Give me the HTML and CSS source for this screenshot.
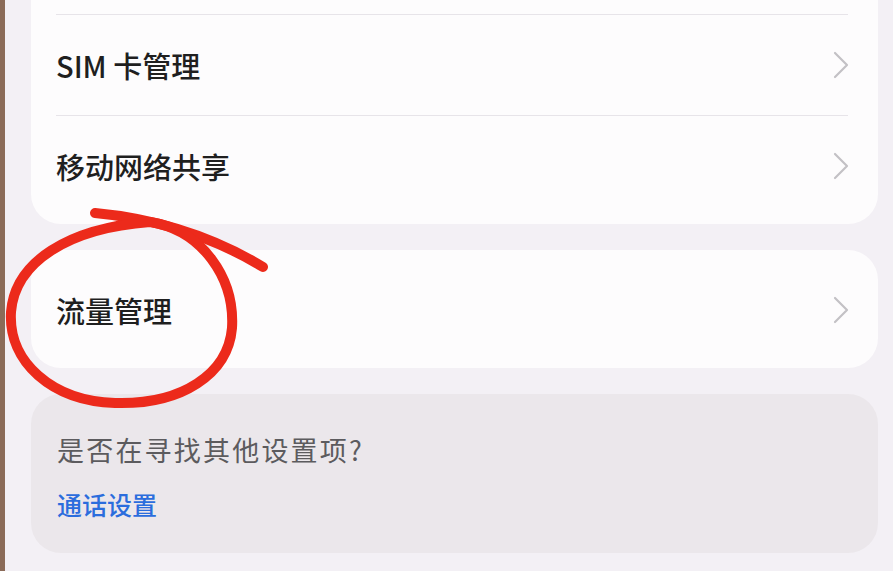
FILE: index.html
```html
<!DOCTYPE html>
<html lang="zh-CN">
<head>
<meta charset="utf-8">
<title>移动网络</title>
<link rel="stylesheet" href="styles.css">
</head>
<body>
<div class="screen">
  <div class="card card-list">
    <div class="row-partial"></div>
    <div class="row">
      <span class="label">SIM 卡管理</span>
      <svg class="chev" viewBox="0 0 16 28" width="16" height="28"><polyline points="2,2 14,14 2,26" /></svg>
    </div>
    <div class="row">
      <span class="label">移动网络共享</span>
      <svg class="chev" viewBox="0 0 16 28" width="16" height="28"><polyline points="2,2 14,14 2,26" /></svg>
    </div>
  </div>

  <div class="card card-single">
    <div class="row row-single">
      <span class="label">流量管理</span>
      <svg class="chev" viewBox="0 0 16 28" width="16" height="28"><polyline points="2,2 14,14 2,26" /></svg>
    </div>
  </div>

  <div class="card card-hint">
    <p class="hint">是否在寻找其他设置项?</p>
    <a class="link">通话设置</a>
  </div>

  <svg class="annotation" viewBox="0 0 893 571" width="893" height="571">
    <path class="ink" d="M 263 267 C 225 244, 170 220, 95 213" />
    <path class="ink" d="M 150 222 C 202 230, 235 278, 232 328 C 228 374, 182 405, 115 403 C 52 401, 8 362, 11 312 C 15 262, 68 228, 150 222" />
  </svg>
</div>
</body>
</html>
```
FILE: styles.css
```css
* { box-sizing: border-box; }

html, body {
  margin: 0;
  padding: 0;
  width: 893px;
  height: 571px;
  overflow: hidden;
  background: #f3f0f5;
  font-family: "Noto Sans CJK SC", "Noto Sans", sans-serif;
}

.screen {
  position: relative;
  width: 893px;
  height: 571px;
  border-left: 5px solid #8b6b58;
  padding: 0 15px 0 26px;
  display: flex;
  flex-direction: column;
  gap: 26px;
  overflow: hidden;
}

.card {
  background: #fdfcfd;
  border-radius: 30px;
  width: 847px;
}

.card-list {
  margin-top: -40px;
  padding: 0 30px 8px 25px;
}

.row-partial {
  height: 54px;
}

.row {
  height: 101px;
  border-top: 1px solid #e7e4e9;
  display: flex;
  align-items: center;
  justify-content: space-between;
}

.label {
  font-size: 29px;
  font-weight: 500;
  color: #1f1f1f;
  line-height: 36px;
}

.chev {
  flex: none;
  margin-right: -1px;
}

.chev polyline {
  fill: none;
  stroke: #c3c1c5;
  stroke-width: 2.2;
  stroke-linecap: round;
  stroke-linejoin: round;
}

.card-single {
  padding: 0 30px 0 25px;
}

.row-single {
  height: 118px;
  border-top: none;
  padding-top: 2px;
}

.card-hint {
  background: #ebe7eb;
  padding: 38px 25px 34px 26px;
  display: flex;
  flex-direction: column;
  gap: 21px;
}

.hint {
  margin: 0;
  font-size: 27px;
  line-height: 36px;
  color: #5c5b5e;
  letter-spacing: 2.2px;
}

.link {
  font-size: 25px;
  line-height: 30px;
  font-weight: 500;
  color: #2b6ddd;
}

.annotation {
  position: absolute;
  left: -5px;
  top: 0;
  pointer-events: none;
}

.ink {
  fill: none;
  stroke: #ec2a1b;
  stroke-width: 10;
  stroke-linecap: round;
  stroke-linejoin: round;
}
```
